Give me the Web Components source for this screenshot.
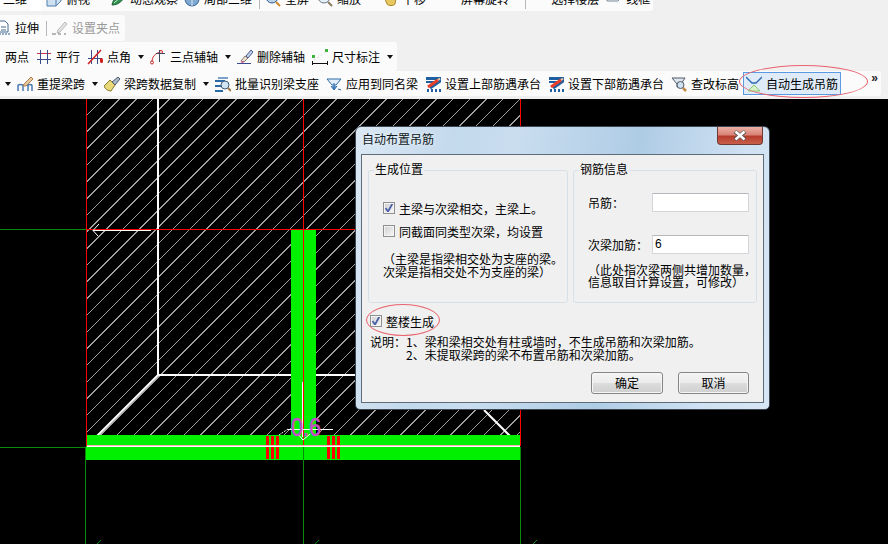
<!DOCTYPE html>
<html lang="zh">
<head>
<meta charset="utf-8">
<title>自动布置吊筋</title>
<style>
html,body{margin:0;padding:0;width:888px;height:544px;overflow:hidden;background:#f0f0f0}
body{font:12px/16px "Noto Sans CJK SC","Liberation Sans",sans-serif;color:#000}
</style>
</head>
<body>
<app-shell>
  <tool-row style="margin-top:-14px;height:25px;margin-bottom:4px;width:653px">
    <tool-item label="二维" icon="none" style="margin-left:3px"></tool-item>
    <tool-blank style="margin-left:3px"></tool-blank>
    <tool-item label="俯视" icon="view" style="margin-left:5px"></tool-item>
    <tool-item label="动态观察" icon="orbit" style="margin-left:20px"></tool-item>
    <tool-item label="局部三维" icon="local" style="margin-left:6px"></tool-item>
    <tool-sep style="margin-left:7px"></tool-sep>
    <tool-item label="全屏" icon="full" style="margin-left:5px"></tool-item>
    <tool-item label="缩放" icon="zoom" style="margin-left:8px"></tool-item>
    <tool-item label="平移" icon="pan" style="margin-left:21px"></tool-item>
    <tool-item label="屏幕旋转" icon="rot" style="margin-left:15px"></tool-item>
    <tool-sep style="margin-left:16px"></tool-sep>
    <tool-item label="选择楼层" icon="floor" style="margin-left:5px"></tool-item>
    <tool-item label="线框" icon="wire" style="margin-left:7px"></tool-item>
  </tool-row>
  <tool-row style="height:26px;margin-bottom:1px;width:125px">
    <tool-item label="拉伸" icon="stretch" style="margin-left:-5px"></tool-item>
    <tool-sep style="margin-left:7px;height:15px"></tool-sep>
    <tool-item label="设置夹点" icon="grip" disabled style="margin-left:5px"></tool-item>
  </tool-row>
  <tool-row style="height:29px;width:397px">
    <tool-item label="两点" icon="none" style="margin-left:5px"></tool-item>
    <tool-item label="平行" icon="par" style="margin-left:7px"></tool-item>
    <tool-item label="点角" icon="angle" caret style="margin-left:7px"></tool-item>
    <tool-item label="三点辅轴" icon="three" caret style="margin-left:6px"></tool-item>
    <tool-item label="删除辅轴" icon="del" style="margin-left:6px"></tool-item>
    <tool-item label="尺寸标注" icon="dim" caret style="margin-left:7px"></tool-item>
  </tool-row>
  <tool-row style="height:25px;margin-bottom:3px;width:881px">
    <tool-item icon="none" caret style="margin-left:-2px"></tool-item>
    <tool-item label="重提梁跨" icon="beam" caret style="margin-left:6px"></tool-item>
    <tool-item label="梁跨数据复制" icon="brush" caret style="margin-left:6px"></tool-item>
    <tool-item label="批量识别梁支座" icon="batch" style="margin-left:6px"></tool-item>
    <tool-item label="应用到同名梁" icon="apply" style="margin-left:7px"></tool-item>
    <tool-item label="设置上部筋遇承台" icon="z" style="margin-left:7px"></tool-item>
    <tool-item label="设置下部筋遇承台" icon="z" style="margin-left:7px"></tool-item>
    <tool-item label="查改标高" icon="level" style="margin-left:7px"></tool-item>
    <tool-item label="自动生成吊筋" icon="hanger" active style="margin-left:4px"></tool-item>
    <tool-more style="margin-left:30px"></tool-more>
  </tool-row>
  <cad-canvas>
    <hanger-dialog></hanger-dialog>
  </cad-canvas>
  <red-ring style="left:739px;top:65px;width:127px;height:31px"></red-ring>
</app-shell>

<script>
const ICONS = {
  none:'',
  view:'<path d="M1 6 6 1h9v9l-5 5H1z" fill="#cfe0f0" stroke="#4f7fae"/><path d="M1 6h9v9M10 6l5-5" fill="none" stroke="#4f7fae"/>',
  orbit:'<path d="M2 14C3 7 9 3 15 3 14 9 9 14 2 14z" fill="#2f8f4f" stroke="#1d5f36"/><path d="M4 12 12 5" stroke="#cfe8d0"/>',
  local:'<circle cx="8" cy="8" r="7" fill="#7fa8d0" stroke="#2f5f90"/><path d="M1 8h14M8 1v14" stroke="#dfeaf5"/>',
  full:'<circle cx="7" cy="6" r="6" fill="#bcd3ea" stroke="#2f5f90"/><path d="M11 11l4 4" stroke="#d08a2a" stroke-width="2"/>',
  zoom:'<circle cx="7" cy="6" r="6" fill="#e6eef6" stroke="#68788a"/><path d="M11 11l4 4" stroke="#8a7a5a" stroke-width="2"/>',
  pan:'<path d="M3 8c3-3 9-3 11-1l-1 6c-1 2-7 2-8 0z" fill="#e8c860" stroke="#a8862a"/>',
  rot:'<path d="M1 4h12v3H6l-3 1z" fill="#e8c860" stroke="#a8662a"/><path d="M4 7 13 1" stroke="#d03030" stroke-width="2"/>',
  floor:'<path d="M1 2h14M1 5h14" stroke="#2a5a9a" stroke-width="2"/>',
  wire:'<path d="M1 7V1h14v6l-3 3H1z" fill="#f2f6fa" stroke="#7a8a9a"/>',
  stretch:'<path d="M3 1h7l3 3v8H3z" fill="#fff" stroke="#43688f"/><path d="M6 7h5M6 10h5" stroke="#43688f"/><path d="M1 14h14" stroke="#2a5a9a" stroke-dasharray="2 1"/>',
  grip:'<path d="M6 10 13 2l2 2-7 8-3 1z" fill="#e4e4e4" stroke="#b8b8b8"/><path d="M0 14h4M6 14h3M12 14h2" stroke="#a0a0a0" stroke-width="1.5"/>',
  par:'<path d="M1 4.500h14" stroke="#c23a4a"/><path d="M1 10.500h14M4.500 1v14M11.500 1v14" stroke="#3b4a8a"/>',
  angle:'<path d="M4.500 1v14M10.500 1v14M1 9.500h14" stroke="#3b4a8a"/><path d="M1 15 14 1" stroke="#d02020" stroke-width="1.500"/><rect x="13" y="9" width="3" height="5" rx="1.500" fill="#d02020"/>',
  three:'<path d="M2 13C2 8 5 4 11 3" fill="none" stroke="#d02020"/><circle cx="2" cy="13.500" r="1.500" fill="#fff" stroke="#d02020"/><circle cx="11" cy="3" r="1.500" fill="#fff" stroke="#d02020"/><path d="M6 4.500h9M9.500 1v12" stroke="#404a60"/>',
  del:'<path d="M0 14.500h14" stroke="#3b4a8a"/><path d="M4 12 8 7l3 2-4 4z" fill="#e8e0d0" stroke="#8a7a6a"/><path d="M9 7 14 1l2 2-5 6z" fill="#c0d0e8" stroke="#4a5a8a"/><path d="M3 13l4-1-1 2z" fill="#d04a8a"/>',
  dim:'<rect x="0" y="6" width="3" height="3" fill="#3cb43c"/><rect x="13" y="0" width="3" height="3" fill="#3cb43c"/><path d="M2 11 14 3" stroke="#ddd" stroke-dasharray="2 2"/><path d="M.5 12v4M15.500 12v4M1 14.500h14" stroke="#111"/>',
  beam:'<path d="M1 15V10c0-2 5-2 5 0v5M6 15v-5c0-2 5-2 5 0v5M11 15v-5c0-2 4-2 4 0v5" fill="none" stroke="#4a78b0" stroke-width="1.500"/><path d="M7 8 14 1l2 2-7 7-3 0z" fill="#e8c8a0" stroke="#b08050"/>',
  brush:'<path d="M0 10 6 4l5 5-4 6c-3 0-6-2-7-5z" fill="#e8d878" stroke="#8a7a30"/><path d="M8 6l6-5 2 2-5 6z" fill="#a8b8c8" stroke="#505a68"/>',
  batch:'<path d="M0 4h10v2H0zM0 9h7v2H0zM0 14h8v2H0z" fill="#2a6aa8"/><path d="M3 1h10v2H3z" fill="#7aa0c8"/><circle cx="10" cy="9" r="4" fill="#d0e4f4" stroke="#405a78"/><path d="M13 12l3 3" stroke="#a07a40" stroke-width="2"/>',
  apply:'<path d="M1 3h14l-5 6H6z" fill="#e4eef8" stroke="#2a6aa8"/><path d="M8 7v6M5 10l3 4 3-4" fill="#6aa0d8" stroke="#2a6aa8"/><path d="M12 13l3 1" stroke="#2a6aa8"/>',
  z:'<path d="M1 2.500H15V5L5 12" fill="none" stroke="#1f5f9f" stroke-width="3"/><path d="M1 6 9 6" stroke="#1f5f9f" stroke-width="2"/><path d="M2 14.500h2M6 14.500h2M10 14.500h2M14 14.500h2" stroke="#1f5f9f" stroke-width="3"/><path d="M3 11 13 4" stroke="#e8402a" stroke-width="3"/><path d="M13 4 15 2.500" stroke="#f0c8a0" stroke-width="2"/>',
  level:'<path d="M1 2h13l-4 6v3H6V8z" fill="#dfe6ee" stroke="#505a68"/><circle cx="9.500" cy="9" r="3.500" fill="#cfe0f0" stroke="#505a68"/><path d="M12 12l3 3" stroke="#c08a40" stroke-width="2.500"/>',
  hanger:'<path d="M0 1 6 7h4l6-6" fill="none" stroke="#2a6ab0" stroke-width="1.300"/><path d="M2 15 8 9l6 6z" fill="#d8f0c8" stroke="#8ac870"/>'
};
function defineEl(name, css, html, extra){
  customElements.define(name, class extends HTMLElement{
    constructor(){super();this.attachShadow({mode:'open'}).innerHTML='<style>'+css+'</style>'+(html||'');}
    connectedCallback(){ if(extra) extra.call(this); }
  });
}
defineEl('app-shell',
  ':host{display:flex;flex-direction:column;position:relative;width:888px;height:544px;overflow:hidden;background:#f0f0f0}',
  '<slot></slot>');
defineEl('tool-row',
  ':host{display:flex;align-items:center;flex:none;background:#fbfbfb;border-radius:0 3px 3px 0;white-space:nowrap;overflow:hidden}',
  '<slot></slot>');
defineEl('tool-sep',':host{display:block;flex:none;width:1px;height:20px;background:#b4b8bc}');
defineEl('tool-blank',':host{display:block;flex:none;width:11px;height:25px;background:#fff}');
defineEl('tool-more',
  ':host{display:block;flex:none;font:bold 12px/14px "Liberation Sans",sans-serif;color:#222;margin-top:-12px}',
  '»');
defineEl('tool-item',
  `:host{display:flex;flex:none;align-items:center;font:12px/18px "Noto Sans CJK SC","Liberation Sans",sans-serif;color:#000}
   :host([disabled]){color:#9a9a9a}
   :host([active]){background:#dfebf8;border:1px solid #5b9ae0;padding:0 2px;height:21px}
   svg{display:block;flex:none;width:16px;height:16px;margin-right:4px}
   .c{display:none;width:0;height:0;margin-left:7px;border:3px solid transparent;border-top:4px solid #111;border-bottom:0}
   :host([caret]) .c{display:block}`,
  '<svg viewBox="0 0 16 16"></svg><span class="t"></span><i class="c"></i>',
  function(){
    const r=this.shadowRoot,s=r.querySelector('svg'),n=this.getAttribute('icon');
    if(n==='none'){s.remove();} else s.innerHTML=ICONS[n];
    r.querySelector('.t').textContent=this.getAttribute('label')||'';
  });
defineEl('red-ring',
  ':host{display:block;position:absolute;border:1px solid #e8636e;border-radius:50%;pointer-events:none}');
defineEl('cad-canvas',
  ':host{display:block;position:relative;flex:none;height:445px;background:#000;overflow:hidden} svg{display:block;position:absolute;left:0;top:0}',
  '<svg width="888" height="445" viewBox="0 99 888 445"></svg><slot></slot>',
  function(){
    let h='';
    for(let c=202-16.67*10;c<1000;c+=16.67){
      h+=`<line x1="${c-99}" y1="99" x2="${c-435}" y2="435"/>`;
    }
    const tick=(a,b)=>`<path d="M${a} ${b}l4-4" stroke="#0a8a0a" fill="none"/>`;
    this.shadowRoot.querySelector('svg').innerHTML=`
    <defs><clipPath id="hz"><rect x="87" y="99" width="433" height="336"/></clipPath></defs>
    <g clip-path="url(#hz)" stroke="#a0a0a0" shape-rendering="crispEdges">${h}</g>
    <g fill="none" stroke="#fff" stroke-width="2">
      <path d="M158 99V375H356"/><path d="M158 375 87 446"/><path d="M484 410 520 446"/>
    </g>
    <rect x="291" y="230" width="25" height="205" fill="#00f000"/>
    <rect x="86" y="435" width="434" height="25" fill="#00f000"/>
    <g fill="#f00">
      <rect x="266" y="436" width="3" height="23"/><rect x="271" y="436" width="3" height="23"/><rect x="276" y="436" width="3" height="23"/>
      <rect x="327" y="436" width="3" height="23"/><rect x="332" y="436" width="3" height="23"/><rect x="337" y="436" width="3" height="23"/>
    </g>
    <g fill="none" shape-rendering="crispEdges">
      <path d="M0 229.500H86M0 447.500H86M85.500 447V544M303.500 447V544M520.500 447V544" stroke="#0a8a0a"/>
      <path d="M86.500 99V446M303.500 99V446M520.500 99V446M86 229.500H356" stroke="#f00"/>
    </g>
    <path d="M87 446.500H520" stroke="#fff" shape-rendering="crispEdges"/>
    <path d="M87 445.500H520" stroke="#ffb0b0" shape-rendering="crispEdges"/>
    <g fill="none" stroke="#fff">
      <path d="M93 230.500H151" shape-rendering="crispEdges" stroke-width="1"/>
      <path d="M99 224 93 230.500 98 236"/>
      <path d="M302.500 382V437M288 429.500H333"/>
      <path d="M298 434 303 440 310 434"/>
      <path d="M279 435 288 429" stroke-dasharray="2 1"/>
    </g>
    <text x="291" y="436" font-family="'Liberation Sans',sans-serif" font-size="26" fill="#c64fc6" stroke="#c64fc6" stroke-width=".6" textLength="30" lengthAdjust="spacingAndGlyphs">0.6</text>
    ${tick(97,544)}${tick(315,544)}${tick(533,544)}`;
  });
defineEl('group-box',
  `:host{display:block;flex:none}
   fieldset{box-sizing:border-box;width:100%;height:100%;margin:0;padding:0 0 0 14px;border:1px solid #d6e0e6;border-radius:3px;min-width:0}
   legend{margin-left:-9px;padding:0 1px;font:12px/16px "Noto Sans CJK SC",sans-serif;height:18px}`,
  '<fieldset><legend></legend><slot></slot></fieldset>',
  function(){this.shadowRoot.querySelector('legend').textContent=this.getAttribute('title-text');});
defineEl('win-check',
  `:host{display:flex;align-items:center;height:18px;white-space:nowrap}
   .b{box-sizing:border-box;width:12px;height:12px;margin-right:4px;border:1px solid #8e8f8f;outline:1px solid #f4f4f4;outline-offset:-2px;background:linear-gradient(135deg,#cfcfcf,#ececec 70%,#f6f6f6);display:block}
   svg{display:none;width:10px;height:10px;margin:0}
   :host([checked]) svg{display:block}`,
  '<span class="b"><svg viewBox="0 0 10 10"><path d="M1.500 5 4 8.500 8.500 .5" fill="none" stroke="#4a61a8" stroke-width="1.800"/></svg></span><slot></slot>');
defineEl('win-input',
  `:host{display:block;box-sizing:border-box;flex:none;width:97px;height:19px;background:#fff;border:1px solid #d2d6da;border-top-color:#b4b8bc;border-radius:1px;padding-left:2px;font:12px/17px "Liberation Sans",sans-serif}`,
  '<slot></slot>');
defineEl('win-button',
  `:host{display:block;box-sizing:border-box;flex:none;width:72px;height:22px;border:1px solid #858585;border-radius:3px;text-align:center;font:12px/20px "Noto Sans CJK SC",sans-serif;
   background:linear-gradient(#f4f4f4,#ececec 48%,#dcdcdc 52%,#cfcfcf);box-shadow:inset 0 0 0 1px #f6f6f6}`,
  '<slot></slot>');
defineEl('hanger-dialog',
  `:host{display:block;position:absolute;left:355px;top:27px;box-sizing:border-box;width:415px;height:284px;border:1px solid #3c4650;border-radius:6px 6px 5px 5px;
     background:linear-gradient(100deg,#dbe8f4 0,#c3d9ec 22%,#c9ddef 35%,#afcce5 62%,#cfe1f2 85%,#d8e6f4 100%);
     font:12px/13px "Noto Sans CJK SC","Liberation Sans",sans-serif;color:#000}
   .title{height:27px;padding-left:6px;line-height:24px;color:#101820;text-shadow:0 0 4px #eef5fb}
   .close{position:absolute;right:6px;top:0;box-sizing:border-box;width:46px;height:18px;border:1px solid #6e3a36;border-top:0;border-radius:0 0 4px 4px;
     background:linear-gradient(#eab0a8,#db8478 45%,#b63c2c 55%,#c9604c);display:flex;justify-content:center;align-items:center}
   .close svg{display:block;width:14px;height:11px}
   .client{box-sizing:border-box;margin-left:5px;width:403px;height:249px;border:1px solid #5d6c78;background:#f0f0f0;display:flex;flex-direction:column}
   .groups{display:flex;gap:5px;padding:6px 0 0 6px;height:142px;flex:none}
   .g1{width:200px}.g2{width:184px}
   .col{display:flex;flex-direction:column;white-space:nowrap}
   win-check+win-check{margin-top:5px}
   .note{margin-top:12px}
   .field{display:flex;align-items:center;height:19px}
   .field span{width:64px;flex:none}
   .whole{margin:9px 0 0 8px}
   .desc{margin:5px 0 0 8px;white-space:nowrap}
   .desc div+div{padding-left:36px}
   .btns{display:flex;justify-content:flex-end;gap:15px;margin-top:11px;padding-right:14px}
   .btns win-button:last-child{width:71px}
   red-ring{left:10px;top:177px;width:72px;height:30px}`,
  `<div class="title">自动布置吊筋</div>
   <div class="close"><svg viewBox="0 0 14 11"><path d="M2 1.500 12 9.500M12 1.500 2 9.500" stroke="#555" stroke-width="4"/><path d="M2.500 1.500 11.500 9.500M11.500 1.500 2.500 9.500" stroke="#fff" stroke-width="2.400"/></svg></div>
   <div class="client">
     <div class="groups">
       <group-box class="g1" title-text="生成位置">
         <div class="col" style="padding-top:20px">
           <win-check checked>主梁与次梁相交，主梁上。</win-check>
           <win-check>同截面同类型次梁，均设置</win-check>
           <div class="note">（主梁是指梁相交处为支座的梁。<br>次梁是指相交处不为支座的梁）</div>
         </div>
       </group-box>
       <group-box class="g2" title-text="钢筋信息">
         <div class="col" style="padding-top:14px">
           <div class="field"><span>吊筋：</span><win-input></win-input></div>
           <div class="field" style="margin-top:23px"><span>次梁加筋：</span><win-input>6</win-input></div>
           <div class="note" style="margin-top:10px;line-height:12px">（此处指次梁两侧共增加数量，<br>信息取自计算设置，可修改）</div>
         </div>
       </group-box>
     </div>
     <win-check checked class="whole">整楼生成</win-check>
     <div class="desc"><div>说明：1、梁和梁相交处有柱或墙时，不生成吊筋和次梁加筋。</div><div>2、未提取梁跨的梁不布置吊筋和次梁加筋。</div></div>
     <div class="btns"><win-button>确定</win-button><win-button>取消</win-button></div>
   </div>
   <red-ring></red-ring>`);
</script>
</body>
</html>
